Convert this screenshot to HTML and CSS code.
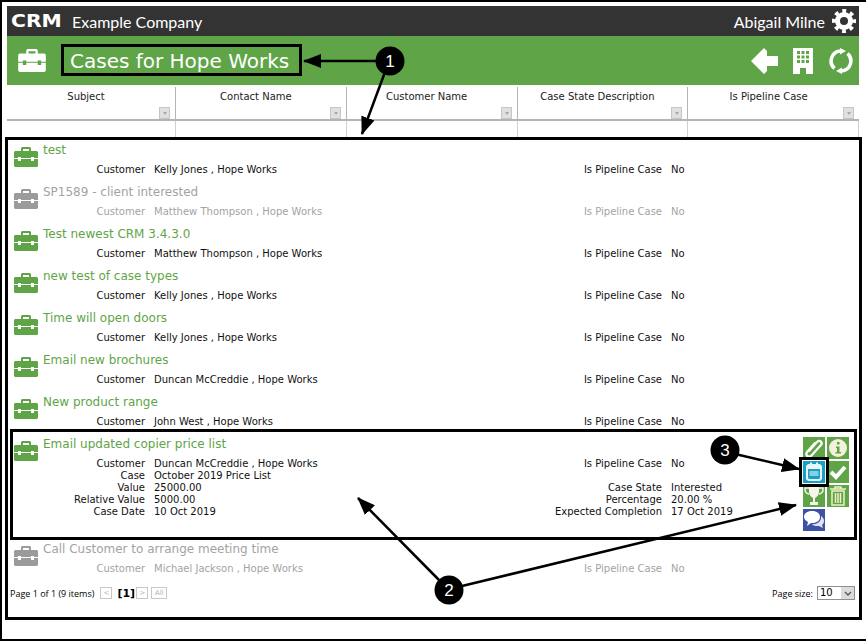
FILE: index.html
```html
<!DOCTYPE html>
<html>

<head>
    <title>Cases for Hope Works</title>
    <meta charset="utf-8">
    <link rel="stylesheet" href="styles.css">
</head>

<body>
<svg class="defs" width="0" height="0">
    <symbol id="case" viewBox="0 0 24 20">
        <path fill-rule="evenodd" d="M8 0h8l1 1v3h6l1 1v6h-4v-1h-3v1H7v-1H4v1H0V5l1-1h6V1zM9 2v2h6V2zM0 12h4v2h3v-2h10v2h3v-2h4v7l-1 1H1l-1-1z"/>
    </symbol>
</svg>

<div class="shot">
    <div class="app">
        <div class="topbar">
            <div class="brand">
                <span class="logo">CRM</span>
                <span class="company">Example Company</span>
            </div>
            <div class="user">
                <span class="user-name">Abigail Milne</span>
                <svg class="gear" viewBox="0 0 24 24" width="24" height="24">
                    <circle cx="12" cy="12" r="6.5" fill="none" stroke="#fff" stroke-width="5"/>
                    <circle cx="12" cy="12" r="10" fill="none" stroke="#fff" stroke-width="4" stroke-dasharray="3.85 4" stroke-dashoffset="2"/>
                </svg>
            </div>
        </div>

        <div class="titlebar">
            <svg class="title-icon" width="28" height="23"><use href="#case"/></svg>
            <div class="page-title">Cases for Hope Works</div>
            <div class="title-actions">
                <svg width="27" height="26" viewBox="0 0 27 26"><path fill="#fff" d="M13 0l3 3v5h11v10H16v5l-3 3L0 13z"/></svg>
                <svg class="building" width="20" height="26" viewBox="0 0 20 26">
                    <path fill="#fff" fill-rule="evenodd" d="M0 0h20v26h-7v-6H7v6H0zM4 3v3h3V3zM8.500 3v3h3V3zM13 3v3h3V3zM4 7.500v3h3v-3zM8.500 7.500v3h3v-3zM13 7.500v3h3v-3zM4 12v3h3v-3zM8.500 12v3h3v-3zM13 12v3h3v-3z"/>
                </svg>
                <svg width="24" height="26" viewBox="0 0 24 26">
                    <path fill="none" stroke="#fff" stroke-width="3.500" d="M5.500 20.500A10 10 0 0 1 11 3.100M18.500 5.500A10 10 0 0 1 13 22.900"/>
                    <path fill="#fff" d="M11 0l6 3-6 3.500zM13 26l-6-3 6-3.500z"/>
                </svg>
            </div>
        </div>

        <div class="grid-head">
            <div class="head-cell">Subject<span class="filter-btn"></span></div>
            <div class="head-cell">Contact Name<span class="filter-btn"></span></div>
            <div class="head-cell">Customer Name<span class="filter-btn"></span></div>
            <div class="head-cell">Case State Description<span class="filter-btn"></span></div>
            <div class="head-cell">Is Pipeline Case<span class="filter-btn"></span></div>
        </div>
        <div class="grid-filter">
            <div></div><div></div><div></div><div></div><div></div>
        </div>
    </div>

    <div class="case-box">
        <div class="case-row">
            <svg class="case-icon" width="24" height="20"><use href="#case"/></svg>
            <div class="case-body">
                <div class="case-title">test</div>
                <div class="details">
                    <span class="lbl">Customer</span><span>Kelly Jones , Hope Works</span>
                    <span class="lbl">Is Pipeline Case</span><span>No</span>
                </div>
            </div>
        </div>
        <div class="case-row closed">
            <svg class="case-icon" width="24" height="20"><use href="#case"/></svg>
            <div class="case-body">
                <div class="case-title">SP1589 - client interested</div>
                <div class="details">
                    <span class="lbl">Customer</span><span>Matthew Thompson , Hope Works</span>
                    <span class="lbl">Is Pipeline Case</span><span>No</span>
                </div>
            </div>
        </div>
        <div class="case-row">
            <svg class="case-icon" width="24" height="20"><use href="#case"/></svg>
            <div class="case-body">
                <div class="case-title">Test newest CRM 3.4.3.0</div>
                <div class="details">
                    <span class="lbl">Customer</span><span>Matthew Thompson , Hope Works</span>
                    <span class="lbl">Is Pipeline Case</span><span>No</span>
                </div>
            </div>
        </div>
        <div class="case-row">
            <svg class="case-icon" width="24" height="20"><use href="#case"/></svg>
            <div class="case-body">
                <div class="case-title">new test of case types</div>
                <div class="details">
                    <span class="lbl">Customer</span><span>Kelly Jones , Hope Works</span>
                    <span class="lbl">Is Pipeline Case</span><span>No</span>
                </div>
            </div>
        </div>
        <div class="case-row">
            <svg class="case-icon" width="24" height="20"><use href="#case"/></svg>
            <div class="case-body">
                <div class="case-title">Time will open doors</div>
                <div class="details">
                    <span class="lbl">Customer</span><span>Kelly Jones , Hope Works</span>
                    <span class="lbl">Is Pipeline Case</span><span>No</span>
                </div>
            </div>
        </div>
        <div class="case-row">
            <svg class="case-icon" width="24" height="20"><use href="#case"/></svg>
            <div class="case-body">
                <div class="case-title">Email new brochures</div>
                <div class="details">
                    <span class="lbl">Customer</span><span>Duncan McCreddie , Hope Works</span>
                    <span class="lbl">Is Pipeline Case</span><span>No</span>
                </div>
            </div>
        </div>
        <div class="case-row">
            <svg class="case-icon" width="24" height="20"><use href="#case"/></svg>
            <div class="case-body">
                <div class="case-title">New product range</div>
                <div class="details">
                    <span class="lbl">Customer</span><span>John West , Hope Works</span>
                    <span class="lbl">Is Pipeline Case</span><span>No</span>
                </div>
            </div>
        </div>

        <div class="case-row open">
            <svg class="case-icon" width="24" height="20"><use href="#case"/></svg>
            <div class="case-body">
                <div class="case-title">Email updated copier price list</div>
                <div class="details">
                    <span class="lbl">Customer</span><span>Duncan McCreddie , Hope Works</span>
                    <span class="lbl">Is Pipeline Case</span><span>No</span>
                    <span class="lbl">Case</span><span>October 2019 Price List</span>
                    <span></span><span></span>
                    <span class="lbl">Value</span><span>25000.00</span>
                    <span class="lbl">Case State</span><span>Interested</span>
                    <span class="lbl">Relative Value</span><span>5000.00</span>
                    <span class="lbl">Percentage</span><span>20.00 %</span>
                    <span class="lbl">Case Date</span><span>10 Oct 2019</span>
                    <span class="lbl">Expected Completion</span><span>17 Oct 2019</span>
                </div>
            </div>
            <div class="actions">
                <div class="action">
                    <svg viewBox="0 0 22 22"><path fill="none" stroke="#fff" stroke-width="2.200" stroke-linecap="round" d="M6 14L14 5c3-3 6 1 4 3L8 19c-3 2-6-1-4-4l8-9"/></svg>
                </div>
                <div class="action">
                    <svg viewBox="0 0 22 22"><circle cx="11" cy="11" r="9" fill="#f5f0dc"/><path fill="#5fa548" d="M10 5h2.500v2.500H10zM9 9.500h3.500v5.500H14v1.500H8.500V15H10v-4H9z"/></svg>
                </div>
                <div class="action action-blue">
                    <svg viewBox="0 0 22 22"><path fill="#e8f6fb" fill-rule="evenodd" d="M5 3h2V1.500h2V3h4V1.500h2V3h2l2 2v13l-2 2H5l-2-2V5zM5 8v9l1 1h10l1-1V8z"/><path fill="#e8f6fb" opacity=".55" d="M6.500 10h9v5h-9z"/></svg>
                </div>
                <div class="action">
                    <svg viewBox="0 0 22 22"><path fill="none" stroke="#fff" stroke-width="4" d="M4 11l5 5 9-10"/></svg>
                </div>
                <div class="action">
                    <svg viewBox="0 0 22 22"><path fill="#f5f5e8" d="M6 1h10v6c0 3-2 5-4 6v4h3v3H7v-3h3v-4C8 12 6 10 6 7z"/><path fill="none" stroke="#f5f5e8" stroke-width="1.500" d="M6 3H2v2c0 2 2 4 4 4M16 3h4v2c0 2-2 4-4 4"/></svg>
                </div>
                <div class="action">
                    <svg viewBox="0 0 22 22"><path fill="none" stroke="#f3efc8" stroke-width="1.500" d="M5 6h12v14H5zM3 4h16M8 4V2h6v2M8.500 8v10M11 8v10M13.500 8v10"/></svg>
                </div>
                <div class="action action-chat">
                    <svg viewBox="0 0 22 22"><path fill="#fff" d="M9 2c5 0 8 2.500 8 6s-3 6-8 6H8l-4 3 1-4C3 12 1 10 1 8c0-3.500 3-6 8-6z"/><path fill="#dfe3f5" d="M18 7c2 1 3 3 3 5s-1 3-2 4l1 3-4-2h-3c-2 0-3-1-4-2 5 1 10-3 9-8z"/></svg>
                </div>
            </div>
        </div>

        <div class="case-row closed">
            <svg class="case-icon" width="24" height="20"><use href="#case"/></svg>
            <div class="case-body">
                <div class="case-title">Call Customer to arrange meeting time</div>
                <div class="details">
                    <span class="lbl">Customer</span><span>Michael Jackson , Hope Works</span>
                    <span class="lbl">Is Pipeline Case</span><span>No</span>
                </div>
            </div>
        </div>

        <div class="pager">
            <div class="pager-left">
                <span class="pager-text">Page 1 of 1 (9 items)</span>
                <span class="pg-btn">&lt;</span>
                <b class="pg-current">[1]</b>
                <span class="pg-btn">&gt;</span>
                <span class="pg-btn pg-all">All</span>
            </div>
            <div class="pager-right">
                <span class="pager-text">Page size:</span>
                <div class="page-select">
                    <span class="page-value">10</span>
                    <span class="page-drop">
                        <svg width="8" height="5" viewBox="0 0 8 5"><path fill="none" stroke="#555" stroke-width="1.300" d="M1 1l3 3 3-3"/></svg>
                    </span>
                </div>
            </div>
        </div>
    </div>

    <svg class="notes" width="866" height="641" viewBox="0 0 866 641">
        <defs>
            <marker id="tip" markerUnits="userSpaceOnUse" markerWidth="18" markerHeight="14" refX="17" refY="7" orient="auto">
                <path d="M0 0l18 7-18 7z"/>
            </marker>
        </defs>
        <rect class="note-box" x="62.500" y="45.500" width="238" height="29"/>
        <rect class="note-box" x="11.500" y="430.500" width="844" height="108"/>
        <rect class="note-box" x="800.500" y="458.500" width="27" height="27"/>
        <path class="note-line" marker-end="url(#tip)" d="M380 61H304"/>
        <path class="note-line" marker-end="url(#tip)" d="M385 72L362 134"/>
        <path class="note-line" marker-end="url(#tip)" d="M439 580L358 498"/>
        <path class="note-line" marker-end="url(#tip)" d="M462 586L796 505"/>
        <path class="note-line" marker-end="url(#tip)" d="M735 454L799 469"/>
        <circle cx="390" cy="61" r="14.500"/>
        <circle cx="449" cy="590" r="14.500"/>
        <circle cx="725" cy="450" r="14.500"/>
        <text class="note-num" x="390" y="67">1</text>
        <text class="note-num" x="449" y="596">2</text>
        <text class="note-num" x="725" y="456">3</text>
    </svg>
</div>
</body>

</html>
```

FILE: styles.css
```css
html, body {
    margin: 0;
    background-color: white;
}

.defs {
    position: absolute;
}

.shot {
    position: relative;
    box-sizing: border-box;
    width: 866px;
    height: 641px;
    border: 2px solid black;
    border-right: none;
    padding: 4px 0 0 5px;
    font-family: "DejaVu Sans", sans-serif;
    overflow: hidden;
}

.app {
    width: 852px;
}

.topbar {
    height: 30px;
    background-color: #333333;
    color: white;
    display: flex;
    justify-content: space-between;
    align-items: center;
    font-family: Lato, sans-serif;
}

.brand {
    display: flex;
    align-items: center;
}

.logo {
    width: 52px;
    margin-left: 4px;
    font-family: "DejaVu Sans", sans-serif;
    font-weight: bold;
    font-size: 18px;
    line-height: 20px;
    transform: scaleX(1.13);
    transform-origin: left;
}

.company {
    margin-left: 9px;
    font-size: 16px;
}

.user {
    display: flex;
    align-items: center;
    gap: 7px;
    padding-right: 3px;
}

.user-name {
    font-size: 16px;
}

.titlebar {
    height: 49px;
    background-color: #5fa548;
    color: white;
    display: flex;
    align-items: center;
}

.title-icon {
    fill: white;
    margin-left: 11px;
}

.page-title {
    margin-left: 24px;
    font-size: 20px;
}

.title-actions {
    margin-left: auto;
    display: flex;
    align-items: center;
    gap: 15px;
    padding-right: 6px;
}

.building {
    margin-right: 1px;
}

.grid-head, .grid-filter {
    display: grid;
    grid-template-columns: 169px repeat(4, 170.75px);
}

.grid-head {
    box-sizing: border-box;
    height: 36px;
    padding-top: 2px;
    border-bottom: 2px solid #b4b4b4;
}

.head-cell {
    position: relative;
    padding: 2px 10px 0 0;
    text-align: center;
    font-size: 10px;
    line-height: 16px;
    color: #222;
    border-right: 1px solid #b4b4b4;
}

.head-cell:last-child {
    border-right: none;
}

.filter-btn {
    position: absolute;
    right: 5px;
    bottom: 0;
    box-sizing: border-box;
    width: 11px;
    height: 12px;
    background-color: #e0e0e0;
    border: 1px solid #c6c6c6;
}

.filter-btn::after {
    content: "";
    position: absolute;
    left: 3px;
    top: 4px;
    border: 2px solid transparent;
    border-top: 3px solid #a8a8a8;
}

.grid-filter {
    height: 16px;
}

.grid-filter div {
    border-right: 1px solid #d0d0d0;
}

.case-box {
    box-sizing: border-box;
    width: 857px;
    height: 483px;
    margin-left: -2px;
    padding-top: 1px;
    border: 3px solid black;
}

.case-row {
    display: flex;
    height: 42px;
    padding-left: 6px;
    box-sizing: border-box;
    color: #111;
}

.case-row.open {
    height: 105px;
}

.case-icon {
    fill: #5fa548;
    margin: 6px 5px 0 0;
    flex: none;
}

.case-body {
    flex: 1;
}

.case-title {
    color: #5fa548;
    font-size: 12px;
    line-height: 18px;
    margin-bottom: 5px;
}

.details {
    display: grid;
    grid-template-columns: 102px 337px 162px auto;
    column-gap: 9px;
    font-size: 10px;
    line-height: 12px;
}

.lbl {
    text-align: right;
}

.closed, .closed .case-title {
    color: #a3a3a3;
}

.closed .case-icon {
    fill: #9b9b9b;
}

.actions {
    display: grid;
    grid-template-columns: 22px 22px;
    grid-auto-rows: 22px;
    gap: 2px;
    margin: 2px 10px 0 0;
    align-content: start;
}

.action {
    background-color: #5fa548;
}

.action svg {
    display: block;
    width: 22px;
    height: 22px;
}

.action-blue {
    background-color: #17a0c8;
}

.action-chat {
    background-color: #3f51a5;
}

.pager {
    display: flex;
    justify-content: space-between;
    align-items: center;
    margin-top: 4px;
    padding: 0 4px 0 2px;
}

.pager-left, .pager-right {
    display: flex;
    align-items: center;
}

.pager-text {
    font-family: "Open Sans", sans-serif;
    font-size: 9px;
}

.pg-btn {
    box-sizing: border-box;
    min-width: 12px;
    height: 12px;
    margin-left: 6px;
    padding: 0 2px;
    border: 1px solid #c8c8c8;
    color: #b5b5b5;
    font-size: 7px;
    line-height: 10px;
    text-align: center;
}

.pg-current {
    width: 14px;
    margin-left: 5px;
    font-size: 11px;
    white-space: nowrap;
}

.pg-current + .pg-btn {
    margin-left: 5px;
}

.pg-all {
    min-width: 16px;
    margin-left: 3px;
}

.page-select {
    box-sizing: border-box;
    display: flex;
    width: 38px;
    height: 14px;
    margin-left: 4px;
    border: 1px solid #8f8f8f;
}

.page-value {
    flex: 1;
    padding-left: 2px;
    font-size: 10px;
    line-height: 12px;
}

.page-drop {
    width: 13px;
    background-color: #dcdcdc;
    display: flex;
    align-items: center;
    justify-content: center;
}

/* callouts drawn over the page */
.notes {
    position: absolute;
    left: -2px;
    top: -2px;
    pointer-events: none;
}

.note-box {
    fill: none;
    stroke: black;
    stroke-width: 3;
}

.note-line {
    fill: none;
    stroke: black;
    stroke-width: 2.500;
}

.note-num {
    fill: white;
    font-family: "Liberation Sans", sans-serif;
    font-size: 17px;
    text-anchor: middle;
}
```
